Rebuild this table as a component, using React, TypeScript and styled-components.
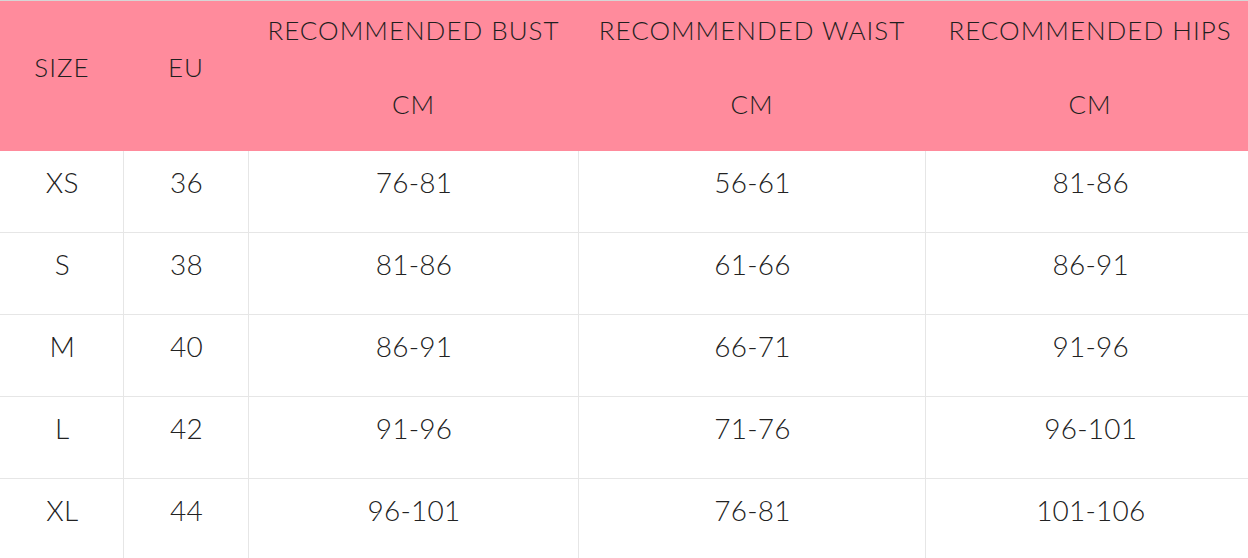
import React from 'react';
import styled, { createGlobalStyle } from 'styled-components';

const GlobalStyle = createGlobalStyle`
  html, body {
    margin: 0;
    padding: 0;
    background: #ffffff;
    overflow: hidden;
  }
  body {
    font-family: Lato, 'Open Sans', 'Liberation Sans', sans-serif;
    font-weight: 300;
    color: #222;
  }
`;

const Table = styled.table`
  width: 1254px;
  border-collapse: collapse;
  table-layout: fixed;
  border-top: 1px solid #d6d6d6;
`;

const HeadRow = styled.tr`
  background-color: #ff8b9c;
`;

const HeadCell = styled.th`
  padding: 11px 0 28px 1px;
  height: 110px;
  font-size: 26px;
  font-weight: 300;
  line-height: 37px;
  text-align: center;
  vertical-align: middle;
  color: #1f1f1f;
  letter-spacing: 1px;
`;

const Row = styled.tr`
  border-bottom: 1px solid #e6e6e6;
`;

const Cell = styled.td`
  padding: 13px 0 32px 2px;
  height: 36px;
  font-size: 28px;
  line-height: 36px;
  text-align: center;
  vertical-align: top;
  color: #222;
  letter-spacing: 0.2px;
  & + & {
    border-left: 1px solid #e6e6e6;
  }
`;

type SizeRow = {
  size: string;
  eu: string;
  bust: string;
  waist: string;
  hips: string;
};

const rows: SizeRow[] = [
  { size: 'XS', eu: '36', bust: '76-81', waist: '56-61', hips: '81-86' },
  { size: 'S', eu: '38', bust: '81-86', waist: '61-66', hips: '86-91' },
  { size: 'M', eu: '40', bust: '86-91', waist: '66-71', hips: '91-96' },
  { size: 'L', eu: '42', bust: '91-96', waist: '71-76', hips: '96-101' },
  { size: 'XL', eu: '44', bust: '96-101', waist: '76-81', hips: '101-106' },
];

const App: React.FC = () => {
  return (
    <>
      <GlobalStyle />
      <Table>
        <colgroup>
          <col style={{ width: 123 }} />
          <col style={{ width: 125 }} />
          <col style={{ width: 330 }} />
          <col style={{ width: 347 }} />
          <col />
        </colgroup>
        <thead>
          <HeadRow>
            <HeadCell>SIZE</HeadCell>
            <HeadCell>EU</HeadCell>
            <HeadCell>
              RECOMMENDED BUST
              <br />
              <br />
              CM
            </HeadCell>
            <HeadCell>
              RECOMMENDED WAIST
              <br />
              <br />
              CM
            </HeadCell>
            <HeadCell>
              RECOMMENDED HIPS
              <br />
              <br />
              CM
            </HeadCell>
          </HeadRow>
        </thead>
        <tbody>
          {rows.map((r) => (
            <Row key={r.size}>
              <Cell>{r.size}</Cell>
              <Cell>{r.eu}</Cell>
              <Cell>{r.bust}</Cell>
              <Cell>{r.waist}</Cell>
              <Cell>{r.hips}</Cell>
            </Row>
          ))}
        </tbody>
      </Table>
    </>
  );
};

export default App;
